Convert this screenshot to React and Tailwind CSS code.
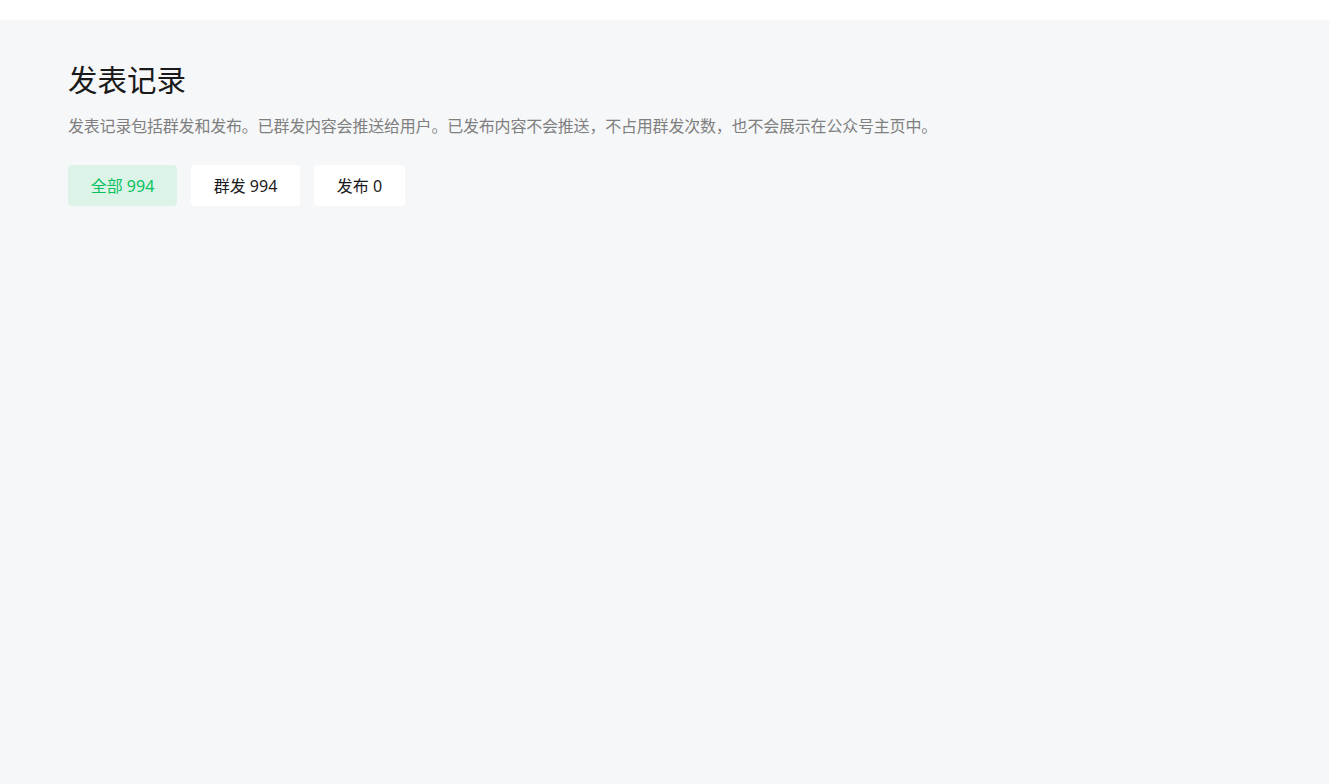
import React, { useState } from 'react'

const tabs = [
    { key: 'all', label: '全部', count: 994, width: 'w-[109px]' },
    { key: 'mass', label: '群发', count: 994, width: 'w-[109px]' },
    { key: 'publish', label: '发布', count: 0, width: 'w-[91px]' },
]

export default function App() {
    const [active, setActive] = useState('all')

    return (
        <div
            className="min-h-screen bg-[#f6f7f9]"
            style={{ fontFamily: '"Noto Sans", "Noto Sans CJK SC", sans-serif' }}
        >
            {/* top bar */}
            <div className="h-[20px] bg-white"></div>

            <div className="px-[68px] pt-[40px]">
                <h2 className="text-[29.5px] leading-[40px] font-normal text-[#1a1a1a]">发表记录</h2>
                <p className="mt-[14px] text-[16px] leading-[24px] tracking-[-0.2px] text-[#7f7f7f]">
                    发表记录包括群发和发布。已群发内容会推送给用户。已发布内容不会推送，不占用群发次数，也不会展示在公众号主页中。
                </p>

                {/* tabs */}
                <div className="mt-[27px] flex gap-[14px]">
                    {tabs.map((t) => (
                        <button
                            key={t.key}
                            onClick={() => setActive(t.key)}
                            className={`${t.width} h-[41px] rounded-[4px] text-[16px] flex items-center justify-center ${active === t.key
                                ? 'bg-[#dcf3e7] text-[#07c160]'
                                : 'bg-white text-[#1a1a1a]'
                                }`}
                        >
                            {t.label} {t.count}
                        </button>
                    ))}
                </div>
            </div>
        </div>
    )
}
